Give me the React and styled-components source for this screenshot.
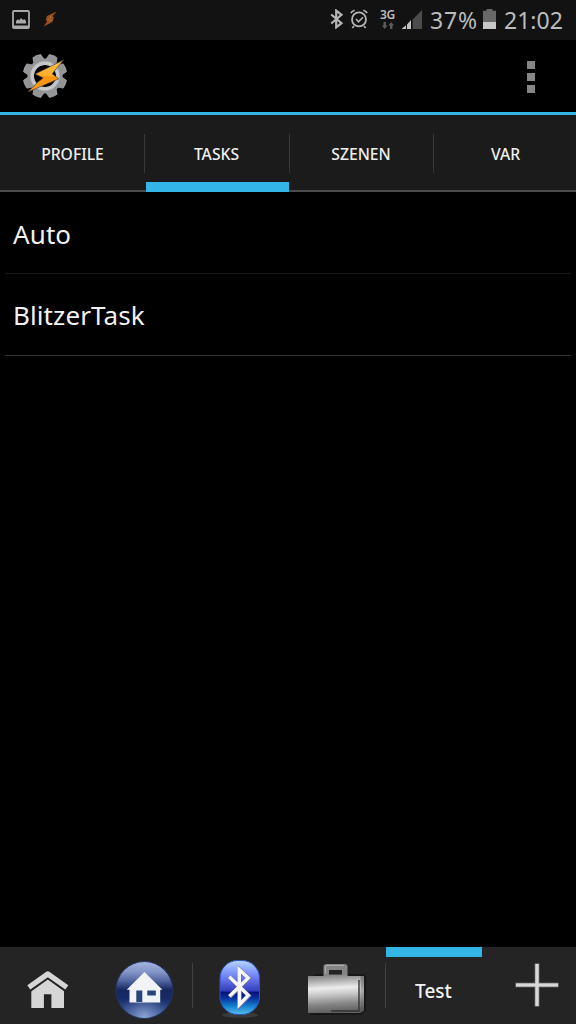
import React, { useState } from 'react';
import styled, { createGlobalStyle } from 'styled-components';

const tabs = ['PROFILE', 'TASKS', 'SZENEN', 'VAR'];
const tasks = ['Auto', 'BlitzerTask'];
const teeth = [22.5, 67.5, 112.5, 157.5, 202.5, 247.5, 292.5, 337.5];

const PictureIcon = () => (
  <svg width="18" height="19" viewBox="0 0 18 19">
    <rect x="1" y="1" width="16" height="17" rx="1" fill="none" stroke="#a9a9a9" strokeWidth="1.8" />
    <path d="M1 15.5h16V18H1zM4 13.5V11l2-1.8 1.3 1L9 8l2 2 1.3-1L14 11v2.5z" fill="#a9a9a9" />
  </svg>
);

const SmallBolt = () => (
  <svg width="14" height="17" viewBox="0 0 14 17">
    <path d="M13.5.5 4 5 2.8 9.2l1.4 1L.5 15.8l9-5L11 6.5 9.6 5.2z" fill="#9a4f1c" />
    <path d="M7.5 5.5v1.5M5.5 8.5l1 1M8 9v1.2" stroke="#b58561" strokeWidth=".9" />
  </svg>
);

const BluetoothIcon = () => (
  <svg width="14" height="20" viewBox="0 0 14 20">
    <path d="m1.2 5.5 10.3 8.7-5.3 4.2V1.6l5.3 4.2-10.3 8.7" fill="none" stroke="#b5b5b5" strokeWidth="2.2" />
  </svg>
);

const AlarmIcon = () => (
  <svg width="18" height="20" viewBox="0 0 18 20" fill="none" stroke="#b5b5b5">
    <circle cx="9" cy="10.4" r="7" strokeWidth="1.8" />
    <path d="m6 10 2.5 2.8L13 8.3" strokeWidth="1.6" />
    <path d="M.8 4.2Q2 1.8 4.7 1.2M13.3 1.2Q16 1.8 17.2 4.2M4 17l-1.7 2M14 17l1.7 2" strokeWidth="1.6" />
  </svg>
);

const DataArrows = () => (
  <svg width="12" height="7" viewBox="0 0 12 7" fill="#5c5c5c">
    <path d="M1.5 0h2.4v3.5h1.6L2.7 7 0 3.5h1.5zM8 7h2.4V3.5H12L9.2 0 6.5 3.5H8z" />
  </svg>
);

const SignalIcon = () => (
  <svg width="20" height="19" viewBox="0 0 20 19">
    <path d="M0 19V18.5L4 15.3V19zM5 19v-4.6L9 10V19z" fill="#c2c2c2" />
    <path d="M10.7 19V9.5L20 0V19z" fill="#4b4b4b" />
  </svg>
);

const BatteryIcon = () => (
  <svg width="13" height="20" viewBox="0 0 13 20">
    <path d="M0 1.8h3.5V0h6v1.8H13V13H0z" fill="#686868" />
    <path d="M0 13h13v7H0z" fill="#c8c8c8" />
  </svg>
);

const AppLogo = () => (
  <svg width="46" height="46" viewBox="0 0 46 46">
    <defs>
      <linearGradient id="bolt" x1="0" y1="0" x2="0" y2="1">
        <stop offset="0" stopColor="#ffc04a" />
        <stop offset=".48" stopColor="#ffb02a" />
        <stop offset=".52" stopColor="#ff930d" />
        <stop offset="1" stopColor="#ff9d20" />
      </linearGradient>
    </defs>
    {teeth.map((angle) => (
      <path key={angle} d="m17.2 9 1.6-7.5q4.2-1.1 8.4 0l1.6 7.5z" fill="#929496" stroke="#b5b6b8" strokeWidth=".6" transform={`rotate(${angle} 23 23)`} />
    ))}
    <circle cx="23" cy="23" r="14.3" fill="none" stroke="#929496" strokeWidth="6.6" />
    <circle cx="23" cy="23" r="12.9" fill="none" stroke="#bfc1c4" strokeWidth="3.6" />
    <circle cx="23" cy="23" r="13" fill="none" stroke="#d6d6d6" strokeWidth=".6" />
    <path d="M41.5 7 13.2 21l8 4L16 29 5.8 39l31-13.2-6.6-5z" fill="url(#bolt)" stroke="#4a443b" strokeWidth=".7" />
  </svg>
);

const PlainHome = () => (
  <svg width="42" height="40" viewBox="0 0 42 40">
    <path d="M4.3 19 21 7l16 12v19H24.4V24.3h-7.5V38H4.3z" fill="#d6d6d7" />
    <path d="m0 18.5 20.8-15L41.6 18.5" fill="none" stroke="#242424" strokeWidth="9.6" />
    <path d="m1.8 17.3 19-13.3 19 13.3" fill="none" stroke="#d6d6d7" strokeWidth="5.2" strokeLinejoin="round" />
  </svg>
);

const RoundHome = () => (
  <svg width="60" height="60" viewBox="0 0 60 60">
    <defs>
      <linearGradient id="orb" x1="0" y1="0" x2="0" y2="1">
        <stop offset="0" stopColor="#a5b6e2" />
        <stop offset=".2" stopColor="#8091c4" />
        <stop offset=".35" stopColor="#4d619b" />
        <stop offset=".5" stopColor="#17275d" />
        <stop offset=".65" stopColor="#172b68" />
        <stop offset="1" stopColor="#4a67a2" />
      </linearGradient>
      <radialGradient id="orbGlow" cx=".5" cy="1" r=".45">
        <stop offset="0" stopColor="#91a8d6" />
        <stop offset="1" stopColor="#5b77b3" stopOpacity="0" />
      </radialGradient>
    </defs>
    <circle cx="30.3" cy="30" r="28.5" fill="url(#orb)" stroke="#21345f" strokeWidth="1" />
    <circle cx="30.3" cy="30" r="28" fill="url(#orbGlow)" />
    <path d="m12.7 29.7 17.7-17.7 18 17.7H46.2V42.5H15.5V29.7z" fill="#f1f3f6" />
    <path d="M22.3 30.5h6V42h-6zM33.3 30.5h8.5v5h-8.5z" fill="#29447c" />
  </svg>
);

const BluetoothBadge = () => (
  <svg width="44" height="60" viewBox="0 0 44 60">
    <defs>
      <linearGradient id="blue" x1="0" y1="0" x2="0" y2="1">
        <stop offset="0" stopColor="#b9d5ff" />
        <stop offset=".15" stopColor="#8faaff" />
        <stop offset=".35" stopColor="#6672ed" />
        <stop offset=".56" stopColor="#3440ba" />
        <stop offset=".59" stopColor="#06107a" />
        <stop offset=".7" stopColor="#0832a0" />
        <stop offset=".85" stopColor="#1683d0" />
        <stop offset="1" stopColor="#59bdec" />
      </linearGradient>
    </defs>
    <ellipse cx="22" cy="56" rx="18" ry="2.7" fill="#3a3a3a" />
    <rect x="2" y="1.5" width="39.5" height="54" rx="17.5" fill="url(#blue)" stroke="#2854b5" strokeWidth="1" />
    <path d="m11.8 18.2 19 18.6-9 9.4v-35l9 8.4-19 18.2" fill="none" stroke="#626da6" strokeWidth="4.2" />
    <path d="m11.3 17.7 19 18.6-9 9.4v-35l9 8.4-19 18.2" fill="none" stroke="#f5f7fa" strokeWidth="3.4" />
  </svg>
);

const Briefcase = () => (
  <svg width="60" height="54" viewBox="0 0 60 54">
    <defs>
      <linearGradient id="steel" x1="0" y1="0" x2=".08" y2="1">
        <stop offset="0" stopColor="#777" />
        <stop offset=".15" stopColor="#a2a2a2" />
        <stop offset=".38" stopColor="#ececec" />
        <stop offset=".55" stopColor="#c8c8c8" />
        <stop offset=".8" stopColor="#858585" />
        <stop offset="1" stopColor="#626262" />
      </linearGradient>
      <linearGradient id="side" x1="0" y1="0" x2="0" y2="1">
        <stop offset="0" stopColor="#777" />
        <stop offset=".4" stopColor="#aaa" />
        <stop offset="1" stopColor="#484848" />
      </linearGradient>
    </defs>
    <path d="M4 14 11 11h47l2 2v35l-5 4H4z" fill="#171717" />
    <path d="M17.5 13V3.5Q17.5 1 20.5 1h18q3 0 3 2.5V13zM23 7v5h13V7z" fill="#858585" fillRule="evenodd" />
    <path d="M19.5 11V4q0-1.5 1.5-1.5h17" fill="none" stroke="#adadad" />
    <path d="M2 13h16l3-1.5h18l3 1.5h16v34.5L54 50H2z" fill="url(#steel)" />
    <path d="M54.5 13H58v34.5L54.5 50z" fill="url(#side)" />
    <path d="M53 17v31H25" fill="none" stroke="#323232" strokeWidth="1.4" />
  </svg>
);

const PlusIcon = () => (
  <svg width="44" height="44" viewBox="0 0 44 44">
    <path d="M22 .5v43M.5 22h43" stroke="#858585" strokeWidth="4.6" />
    <path d="M22 1v42M1 22h42" stroke="#d8d8d9" strokeWidth="3.2" />
  </svg>
);

export default function App() {
  const [active, setActive] = useState('TASKS');

  return (
    <Screen>
      <GlobalStyle />
      <StatusBar>
        <Item $gap={12}><PictureIcon /></Item>
        <Item $gap={13}><SmallBolt /></Item>
        <Item $gap={273}><BluetoothIcon /></Item>
        <Item $gap={6}><AlarmIcon /></Item>
        <Network>
          <span>3G</span>
          <DataArrows />
        </Network>
        <Item $gap={7}><SignalIcon /></Item>
        <StatusText $gap={8} $width={49} $spacing={0.9}>37%</StatusText>
        <Item $gap={4}><BatteryIcon /></Item>
        <StatusText $gap={8} $width={62} $spacing={0}>21:02</StatusText>
      </StatusBar>
      <Header>
        <AppLogo />
        <MenuButton aria-label="Menu"><i /><i /><i /></MenuButton>
      </Header>
      <TabBar>
        {tabs.map((tab) => (
          <Tab key={tab} $active={tab === active} onClick={() => setActive(tab)}>
            {tab}
          </Tab>
        ))}
      </TabBar>
      <TaskList>
        {tasks.map((task) => <Task key={task}>{task}</Task>)}
      </TaskList>
      <BottomBar>
        <Project $top={23}><PlainHome /></Project>
        <Project $top={13}><RoundHome /></Project>
        <Project $top={12} $divider><BluetoothBadge /></Project>
        <Project $top={16} $shift={2}><Briefcase /></Project>
        <Project $top={20} $divider $selected>Test</Project>
        <AddButton aria-label="Add"><PlusIcon /></AddButton>
      </BottomBar>
    </Screen>
  );
}

const GlobalStyle = createGlobalStyle`
  body {
    margin: 0;
    background: #000;
  }
  * { box-sizing: border-box; }
  svg { display: block; flex: none; }
  button {
    margin: 0;
    padding: 0;
    border: 0;
    background: none;
    font: inherit;
    color: inherit;
  }
`;

const Screen = styled.div`
  display: flex;
  flex-direction: column;
  width: 576px;
  height: 1024px;
  overflow: hidden;
  background: #000;
  color: #f2f2f2;
  font-family: "Noto Sans", sans-serif;
`;

const StatusBar = styled.div`
  display: flex;
  align-items: center;
  height: 40px;
  padding-bottom: 2px;
  background: #121212;
  color: #bcbcbc;
`;

const Item = styled.div`
  flex: none;
  margin-left: ${(props) => props.$gap}px;
`;

const StatusText = styled(Item)`
  width: ${(props) => props.$width}px;
  padding-top: 1px;
  font-size: 23px;
  line-height: 30px;
  letter-spacing: ${(props) => props.$spacing}px;
  white-space: nowrap;
`;

const Network = styled.div`
  display: flex;
  flex-direction: column;
  align-items: center;
  gap: 2px;
  width: 15px;
  margin-left: 12px;
  span {
    font-size: 12px;
    font-weight: 600;
    line-height: 10px;
    letter-spacing: -0.3px;
  }
`;

const Header = styled.header`
  display: flex;
  align-items: center;
  justify-content: space-between;
  height: 75px;
  padding: 0 41px 0 22px;
  border-bottom: 3px solid #33b5e5;
`;

const MenuButton = styled.button`
  display: flex;
  flex-direction: column;
  gap: 4px;
  margin-top: 2px;
  i {
    width: 8px;
    height: 8px;
    background: #868686;
  }
`;

const TabBar = styled.nav`
  display: grid;
  grid-template-columns: 144px 145px 144px 143px;
  height: 77px;
  background: linear-gradient(#4b4b4b, #4b4b4b) bottom / 100% 2px no-repeat #1b1b1b;
`;

const Tab = styled.button`
  display: flex;
  align-items: center;
  justify-content: center;
  padding-top: 1px;
  font-size: 15.7px;
  font-weight: 500;
  color: #eee;
  background:
    linear-gradient(#33b5e5, #33b5e5) 2px bottom / 100% ${(props) => (props.$active ? '10px' : '0')} no-repeat,
    linear-gradient(#383838, #383838) 0 19px / 1px 39px no-repeat;
  &:first-child {
    padding-left: 1px;
    background: none;
  }
  &:last-child { padding-left: 2px; }
`;

const TaskList = styled.main`
  flex: 1;
  padding: 0 5px;
`;

const Task = styled.div`
  display: flex;
  align-items: center;
  height: 82px;
  padding: 3px 8px 0;
  border-bottom: 1px solid #171717;
  font-size: 26px;
  letter-spacing: 0.1px;
  &:last-child {
    padding-top: 1px;
    border-color: #333;
  }
`;

const BottomBar = styled.footer`
  display: grid;
  grid-template-columns: 96px 96px 96px 97px 97px 94px;
  height: 77px;
  background: #242424;
`;

const Project = styled.div`
  display: flex;
  align-items: flex-start;
  justify-content: center;
  padding-top: ${(props) => props.$top}px;
  padding-right: ${(props) => props.$shift || 0}px;
  font-size: 19px;
  font-weight: 500;
  line-height: 49px;
  background:
    linear-gradient(#33b5e5, #33b5e5) 1px top / 100% ${(props) => (props.$selected ? '10px' : '0')} no-repeat,
    linear-gradient(#414141, #414141) left 16px / 1px ${(props) => (props.$divider ? '45px' : '0')} no-repeat;
`;

const AddButton = styled.button`
  display: flex;
  justify-content: center;
  align-items: flex-start;
  padding: 16px 0 0 16px;
`;
